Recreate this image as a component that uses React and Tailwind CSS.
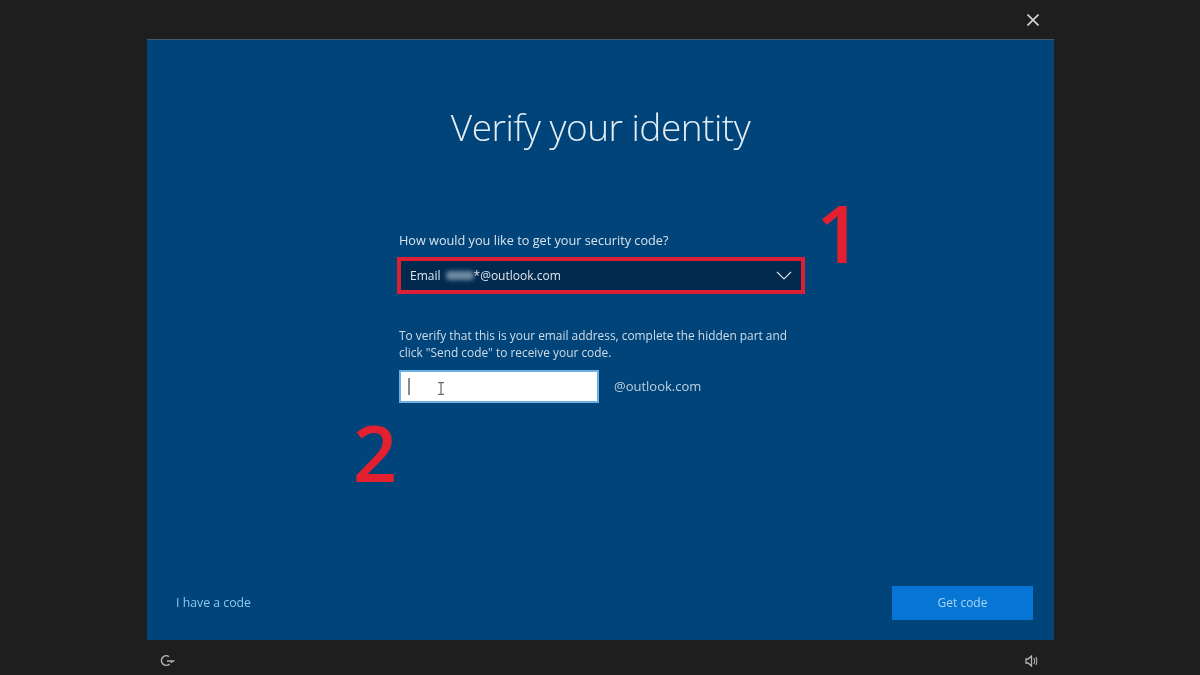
import React from "react";

export default function App() {
  return (
    <div className="relative w-[1200px] h-[675px] overflow-hidden bg-[#1e1e1e] flex flex-col font-['Open_Sans','Liberation_Sans',sans-serif] blur-[0.5px]">
      <div className="h-[39px] flex items-center justify-end pr-[161px] pt-[1px]">
        <svg width="12" height="12" viewBox="0 0 12 12" className="text-[#d4d4d4]">
          <path d="M0.5 0.5 L11.5 11.5 M11.5 0.5 L0.5 11.5" stroke="currentColor" strokeWidth="1.6" fill="none" />
        </svg>
      </div>

      <main className="ml-[147px] w-[907px] h-[601px] bg-[#01447a] border-t border-[#3f5b72] flex flex-col">
        <h1 className="mt-[60px] text-center text-[37px] leading-[54px] font-light text-[#e4edf4] tracking-[-0.5px]">Verify your identity</h1>

        <section className="ml-[250px] mt-[78px] w-[408px] flex flex-col">
          <p className="ml-[2px] text-[12.7px] leading-[16px] text-[#d8e3ec] whitespace-nowrap">How would you like to get your security code?</p>
          <div className="mt-[9px] h-[37px] border-[4px] border-[#dd1f35] bg-[#012a4e] flex items-center justify-between pl-[9px] pr-[9px]">
            <span className="flex items-center text-[12px] text-[#e0e6ec]">
              Email
              <span className="ml-[5px] w-[28px] h-[9px] rounded-[4px] bg-[#6f8ba3] blur-[2px]" />
              <span>*@outlook.com</span>
            </span>
            <svg width="16" height="9" viewBox="0 0 16 9" className="text-[#d7dfe6]">
              <path d="M1 1 L8 8 L15 1" stroke="currentColor" strokeWidth="1.2" fill="none" />
            </svg>
          </div>

          <div className="ml-[2px] mt-[33px] text-[11.9px] leading-[17px] text-[#cfdde8] whitespace-nowrap">
            <p>To verify that this is your email address, complete the hidden part and</p>
            <p>click "Send code" to receive your code.</p>
          </div>

          <div className="ml-[2px] mt-[9px] flex items-center">
            <div className="w-[200px] h-[33px] bg-white border-2 border-[#6db0e4] flex items-center pl-[7px] gap-[27px]">
              <span className="w-[2px] h-[17px] bg-[#8a8a8a]" />
              <svg width="8" height="13" viewBox="0 0 8 13" className="text-[#6b6b6b] mt-[3px]">
                <path d="M1 0.7 H7 M1 12.3 H7 M4 0.7 V12.3" stroke="currentColor" strokeWidth="1.2" fill="none" />
              </svg>
            </div>
            <span className="ml-[15px] text-[13px] text-[#bcd0e0]">@outlook.com</span>
          </div>
        </section>

        <div className="mt-auto mb-[20px] pl-[29px] pr-[21px] flex items-center justify-between">
          <a className="text-[12.3px] font-medium text-[#8cc8f0] pt-[1px]">I have a code</a>
          <button className="w-[141px] h-[34px] bg-[#0675d3] text-[12px] font-medium text-[#a9d4f5]">Get code</button>
        </div>
      </main>

      <div className="flex-1 flex items-center justify-between pl-[160px] pr-[162px] pt-[6px]">
        <svg width="15" height="14" viewBox="0 0 15 14" className="text-[#b5b5b5]">
          <path d="M9 2.6 A4.8 4.8 0 1 0 9.6 10" stroke="currentColor" strokeWidth="1.5" fill="none" />
          <path d="M7 7 H14.5 M11.5 7 V9" stroke="currentColor" strokeWidth="1.4" fill="none" />
        </svg>
        <svg width="13" height="12" viewBox="0 0 13 12" className="text-[#b5b5b5]">
          <path d="M1 4 H3 L6.5 1 V11 L3 8 H1 Z" stroke="currentColor" strokeWidth="1.3" fill="none" />
          <path d="M8.8 3 Q10.5 6 8.8 9 M11 2 Q12.6 6 11 10" stroke="currentColor" strokeWidth="1.1" fill="none" />
        </svg>
      </div>

      <span className="absolute left-[816px] top-[186px] text-[80px] leading-[92px] font-semibold text-[#e2202f] font-['Open_Sans',sans-serif]">1</span>
      <span className="absolute left-[353px] top-[407px] text-[77px] leading-[92px] font-semibold text-[#e2202f] font-['Open_Sans',sans-serif]">2</span>
    </div>
  );
}
